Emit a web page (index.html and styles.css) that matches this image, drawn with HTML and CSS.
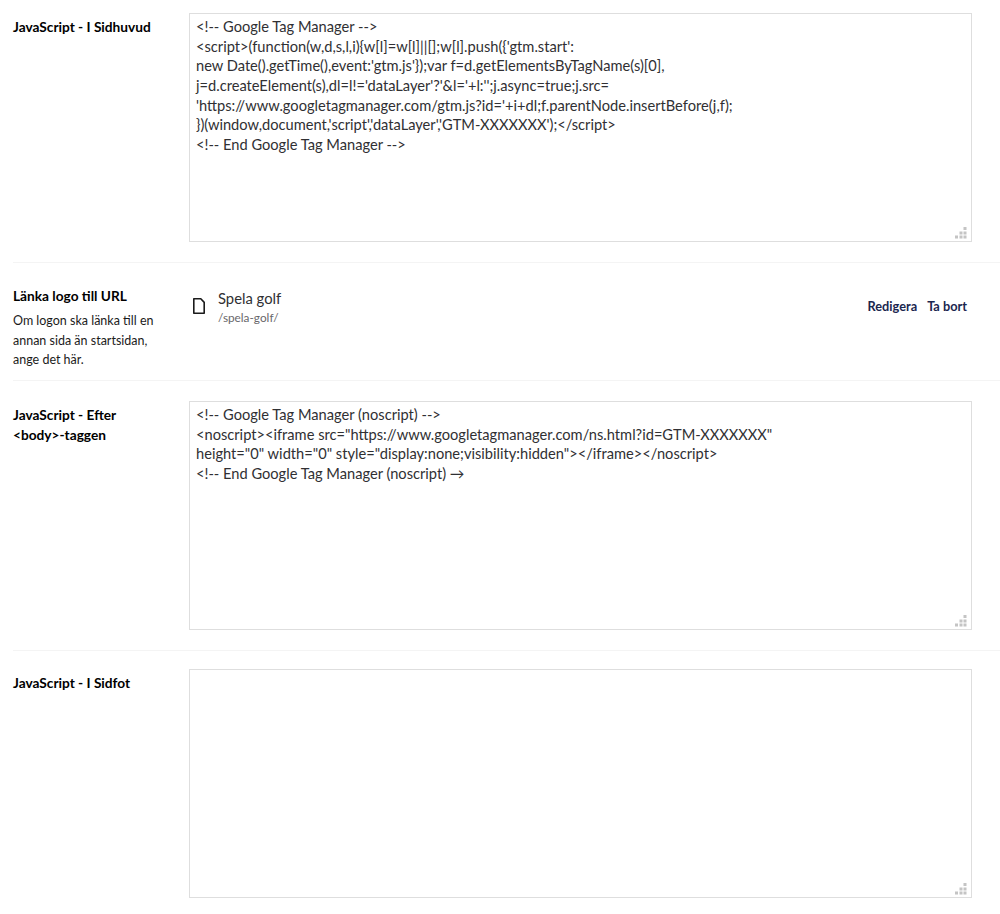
FILE: index.html
```html
<!DOCTYPE html>
<html lang="sv">
<head>
<meta charset="utf-8">
<title>Inställningar</title>
<link rel="stylesheet" href="styles.css">
</head>
<body>
<main class="form">
  <section class="row">
    <div class="label"><h3 class="label-title">JavaScript - I Sidhuvud</h3></div>
    <div class="field">
      <div class="area-wrap">
        <textarea class="area" spellcheck="false" readonly>&lt;!-- Google Tag Manager --&gt;
&lt;script&gt;(function(w,d,s,l,i){w[l]=w[l]||[];w[l].push({'gtm.start':
new Date().getTime(),event:'gtm.js'});var f=d.getElementsByTagName(s)[0],
j=d.createElement(s),dl=l!='dataLayer'?'&amp;l='+l:'';j.async=true;j.src=
'https://www.googletagmanager.com/gtm.js?id='+i+dl;f.parentNode.insertBefore(j,f);
})(window,document,'script','dataLayer','GTM-XXXXXXX');&lt;/script&gt;
&lt;!-- End Google Tag Manager --&gt;</textarea>
        <svg class="grip" viewBox="0 0 12 12" aria-hidden="true"><g fill="#c4c4c4"><rect x="8.5" y="0" width="3" height="3"/><rect x="4.5" y="4.5" width="3" height="3"/><rect x="8.5" y="4.5" width="3" height="3"/><rect x="0" y="8.5" width="3" height="3"/><rect x="4.5" y="8.5" width="3" height="3"/><rect x="8.5" y="8.5" width="3" height="3"/></g></svg>
      </div>
    </div>
  </section>

  <section class="row row-link">
    <div class="label label-link">
      <h3 class="label-title">Länka logo till URL</h3>
      <p class="label-desc">Om logon ska länka till en annan sida än startsidan, ange det här.</p>
    </div>
    <div class="field link-item">
      <svg class="doc" viewBox="0 0 12 16" aria-hidden="true"><path d="M.8.8H7.8L11.2 4.4V15.2H.8Z" fill="none" stroke="#1b1b1b" stroke-width="1.6" stroke-linejoin="round"/></svg>
      <div class="link-text">
        <div class="link-name">Spela golf</div>
        <div class="link-path">/spela-golf/</div>
      </div>
      <div class="actions">
        <a class="action">Redigera</a>
        <a class="action">Ta bort</a>
      </div>
    </div>
  </section>

  <section class="row">
    <div class="label"><h3 class="label-title">JavaScript - Efter &lt;body&gt;-taggen</h3></div>
    <div class="field">
      <div class="area-wrap">
        <textarea class="area" spellcheck="false" readonly>&lt;!-- Google Tag Manager (noscript) --&gt;
&lt;noscript&gt;&lt;iframe src="https://www.googletagmanager.com/ns.html?id=GTM-XXXXXXX"
height="0" width="0" style="display:none;visibility:hidden"&gt;&lt;/iframe&gt;&lt;/noscript&gt;
&lt;!-- End Google Tag Manager (noscript) →</textarea>
        <svg class="grip" viewBox="0 0 12 12" aria-hidden="true"><g fill="#c4c4c4"><rect x="8.5" y="0" width="3" height="3"/><rect x="4.5" y="4.5" width="3" height="3"/><rect x="8.5" y="4.5" width="3" height="3"/><rect x="0" y="8.5" width="3" height="3"/><rect x="4.5" y="8.5" width="3" height="3"/><rect x="8.5" y="8.5" width="3" height="3"/></g></svg>
      </div>
    </div>
  </section>

  <section class="row row-last">
    <div class="label"><h3 class="label-title">JavaScript - I Sidfot</h3></div>
    <div class="field">
      <div class="area-wrap">
        <textarea class="area" spellcheck="false" readonly></textarea>
        <svg class="grip" viewBox="0 0 12 12" aria-hidden="true"><g fill="#c4c4c4"><rect x="8.5" y="0" width="3" height="3"/><rect x="4.5" y="4.5" width="3" height="3"/><rect x="8.5" y="4.5" width="3" height="3"/><rect x="0" y="8.5" width="3" height="3"/><rect x="4.5" y="8.5" width="3" height="3"/><rect x="8.5" y="8.5" width="3" height="3"/></g></svg>
      </div>
    </div>
  </section>
</main>
</body>
</html>
```

FILE: styles.css
```css
* { box-sizing: border-box; }

html, body { margin: 0; padding: 0; background: #fff; }

body {
  font-family: Lato, "Open Sans", sans-serif;
  font-size: 14px;
  line-height: 19.6px;
  color: #1b264f;
}

.form {
  padding: 13.4px 0 0 13px;
}

.row {
  display: flex;
  padding-bottom: 20px;
  margin-bottom: 18.4px;
  border-bottom: 1px solid #f4f4f4;
}

.row-link {
  padding-bottom: 10.2px;
  margin-bottom: 20.4px;
}

.row-last {
  border-bottom: 0;
  margin-bottom: 0;
}

.label {
  width: 176px;
  flex: none;
  padding: 4px 26px 0 0;
}

.label-link {
  padding-top: 5px;
}

.label-title {
  margin: 0;
  font-size: 13.7px;
  line-height: 19.2px;
  font-weight: 700;
  color: #000;
}

.label-desc {
  margin: 5.4px 0 0;
  font-size: 12.5px;
  line-height: 19.6px;
  color: #1b1b1b;
}

.field {
  width: 783px;
  flex: none;
}

.area-wrap {
  position: relative;
  height: 228.6px;
}

.area {
  display: block;
  width: 100%;
  height: 100%;
  padding: 3px 6px;
  margin: 0;
  resize: none;
  border: 1px solid #dedede;
  border-radius: 0;
  outline: 0;
  background: #fff;
  font-family: inherit;
  font-size: 14.65px;
  line-height: 19.55px;
  color: #303033;
  overflow: hidden;
}

.grip {
  position: absolute;
  right: 5px;
  bottom: 3px;
  width: 12px;
  height: 12px;
}

.link-item {
  display: flex;
  align-items: flex-start;
  padding: 0 5px 0 3.5px;
  margin-top: 6.8px;
}

.doc {
  width: 12px;
  height: 16px;
  flex: none;
  margin-top: 9.5px;
}

.link-text {
  margin-left: 13.5px;
  flex: 1;
}

.link-name {
  font-size: 14.8px;
  line-height: 19.6px;
  color: #303033;
  margin-top: 1px;
}

.link-path {
  font-size: 11.8px;
  line-height: 17px;
  color: #68676b;
}

.actions {
  display: flex;
  gap: 10px;
  margin-top: 9px;
}

.action {
  font-size: 12.75px;
  font-weight: 700;
  color: #1b264f;
}
```
